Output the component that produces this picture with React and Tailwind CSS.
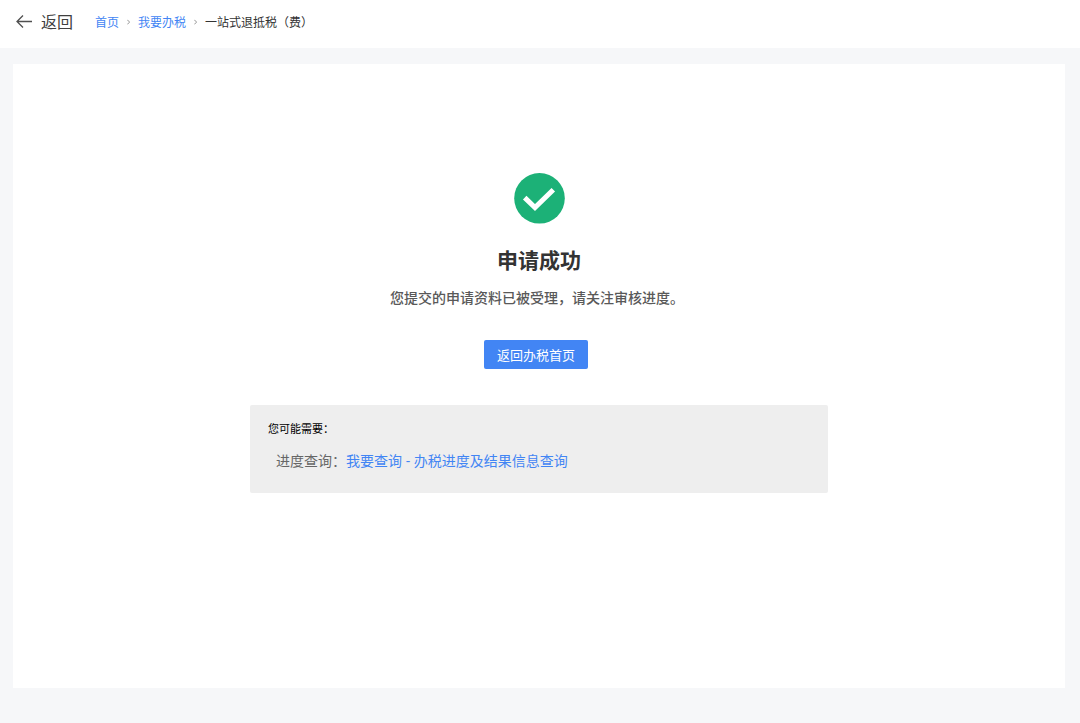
import React from "react";

function BackArrow() {
  return (
    <svg className="h-4 w-4 shrink-0" viewBox="0 0 16 16" fill="none" stroke="#505050" strokeWidth="1.3" aria-hidden="true">
      <path d="M16 7.5H1M7 1.5L1 7.5L7 13.5" />
    </svg>
  );
}

function Separator() {
  return (
    <svg className="h-2 w-[3px] shrink-0" viewBox="0 0 3 8" fill="none" stroke="#888888" strokeWidth="0.9" aria-hidden="true">
      <path d="M0.3 0.8L2.6 3.1L0.3 5.4" />
    </svg>
  );
}

function SuccessIcon() {
  return (
    <svg className="h-[51px] w-[51px]" viewBox="0 0 51 51" aria-hidden="true">
      <circle cx="25.5" cy="25.3" r="25.3" fill="#1cb177" />
      <path d="M10.7 24.6L21 34.6L39.3 16.8" fill="none" stroke="#ffffff" strokeWidth="5" />
    </svg>
  );
}

export default function App() {
  return (
    <div className="flex min-h-screen flex-col bg-[#f6f7f9] font-['Open_Sans','Noto_Sans_CJK_SC',sans-serif] text-[#333333]">
      <header className="flex h-12 items-center bg-white px-4 pb-1">
        <button type="button" className="flex items-center gap-[9px] text-base leading-6 text-[#404040]">
          <BackArrow />
          返回
        </button>
        <nav aria-label="面包屑" className="mt-0.5 ml-[22px] flex items-center gap-2 text-xs leading-5 whitespace-nowrap">
          <a href="#home" className="text-[#4285f4]">首页</a>
          <Separator />
          <a href="#tax" className="text-[#4285f4]">我要办税</a>
          <Separator />
          <span>一站式退抵税（费）</span>
        </nav>
      </header>

      <main className="mt-4 mr-[15px] mb-[35px] ml-[13px] flex flex-1 flex-col items-center bg-white px-4 pt-[109px]">
        <SuccessIcon />
        <h1 className="mt-5 text-[21px] leading-8 font-bold">申请成功</h1>
        <p className="mt-3 mr-1 text-sm leading-5 font-medium text-[#595959]">
          您提交的申请资料已被受理，请关注审核进度。
        </p>
        <button
          type="button"
          className="mt-8 mr-1.5 h-[29px] rounded-xs bg-[#4285f4] px-[13px] text-[13px] leading-5 text-white"
        >
          返回办税首页
        </button>
        <section className="mt-9 w-full max-w-[578px] rounded-xs bg-[#eeeeee] px-[18px] pt-3.5 pb-[22px]">
          <h2 className="text-[11px] leading-5 text-black">您可能需要：</h2>
          <p className="mt-3 pl-2 text-sm leading-5 text-[#666666]">
            进度查询：
            <a href="#progress" className="text-[#4285f4]">我要查询 - 办税进度及结果信息查询</a>
          </p>
        </section>
      </main>
    </div>
  );
}
